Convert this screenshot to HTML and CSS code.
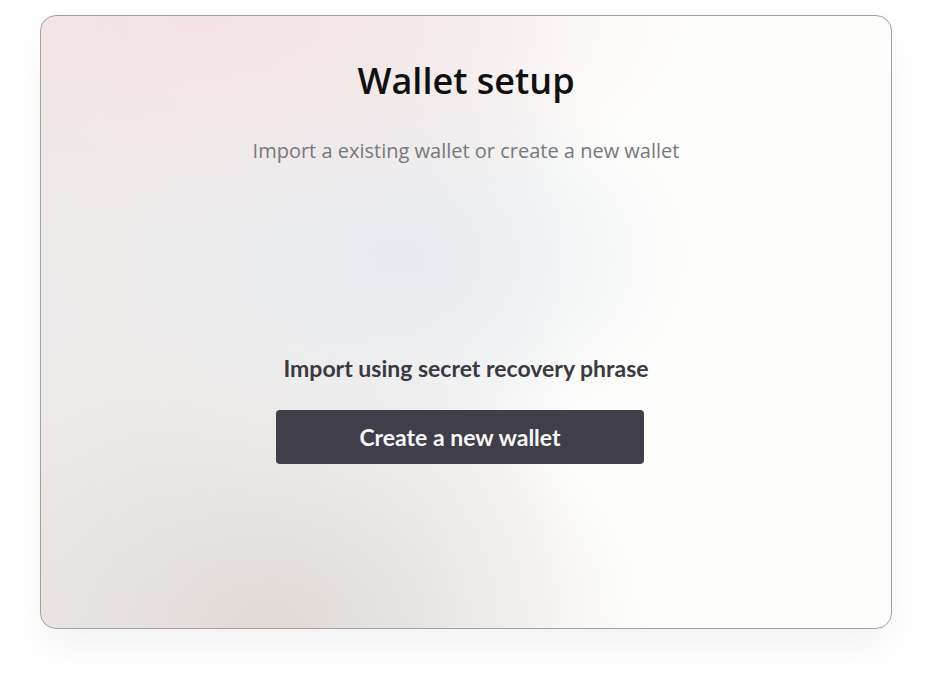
FILE: index.html
```html
<!DOCTYPE html>
<html>
<head>
<meta charset="utf-8">
<link rel="stylesheet" href="styles.css">
</head>
<body>
<div class="page">
  <div class="card">
    <h1 class="title">Wallet setup</h1>
    <p class="subtitle">Import a existing wallet or create a new wallet</p>
    <div class="actions">
      <div class="import-link">Import using secret recovery phrase</div>
      <button class="create-btn">Create a new wallet</button>
    </div>
  </div>
</div>
</body>
</html>
```
FILE: styles.css
```css
html, body {
  margin: 0;
  padding: 0;
  background: #ffffff;
}
.page {
  width: 932px;
  height: 694px;
  padding: 15px 40px 0 40px;
  box-sizing: border-box;
}
.card {
  width: 852px;
  height: 614px;
  box-sizing: border-box;
  border: 1px solid #a3a09f;
  border-radius: 16px;
  box-shadow: 0 20px 40px rgba(0, 0, 0, 0.05);
  background:
    radial-gradient(ellipse 500px 220px at 160px 0px, rgba(243, 226, 228, 0.95), rgba(243, 226, 228, 0) 100%),
    radial-gradient(ellipse 300px 200px at 360px 240px, rgba(228, 233, 238, 0.9), rgba(228, 233, 238, 0) 100%),
    radial-gradient(ellipse 380px 280px at 230px 610px, rgba(224, 219, 215, 1), rgba(224, 219, 215, 0) 100%),
    radial-gradient(ellipse 260px 260px at 0px 300px, rgba(236, 234, 234, 1), rgba(236, 234, 234, 0) 100%),
    linear-gradient(90deg, #eeeae8 0%, #f4f2f1 45%, #fdfdfb 62%, #fdfdfb 100%);
  display: flex;
  flex-direction: column;
  align-items: center;
  overflow: hidden;
}
.title {
  margin: 43px 0 0 0;
  font-family: "Open Sans", "Noto Sans", sans-serif;
  font-weight: 600;
  font-size: 36px;
  line-height: 44px;
  color: #111111;
}
.subtitle {
  margin: 35px 0 0 0;
  font-family: "Open Sans", sans-serif;
  font-weight: 400;
  font-size: 20px;
  line-height: 26px;
  color: #78787c;
}
.actions {
  margin-top: 190px;
  display: flex;
  flex-direction: column;
  align-items: center;
  margin-right: 12px;
}
.import-link {
  margin-left: 12px;
  font-family: "Lato", "Open Sans", sans-serif;
  font-weight: 700;
  font-size: 23px;
  line-height: 28px;
  color: #3b3941;
}
.create-btn {
  margin-top: 28px;
  width: 368px;
  height: 54px;
  border: none;
  border-radius: 4px;
  background: #403e48;
  color: #f6f6f6;
  font-family: "Lato", "Open Sans", sans-serif;
  font-weight: 700;
  font-size: 23px;
  padding: 0;
}
```
